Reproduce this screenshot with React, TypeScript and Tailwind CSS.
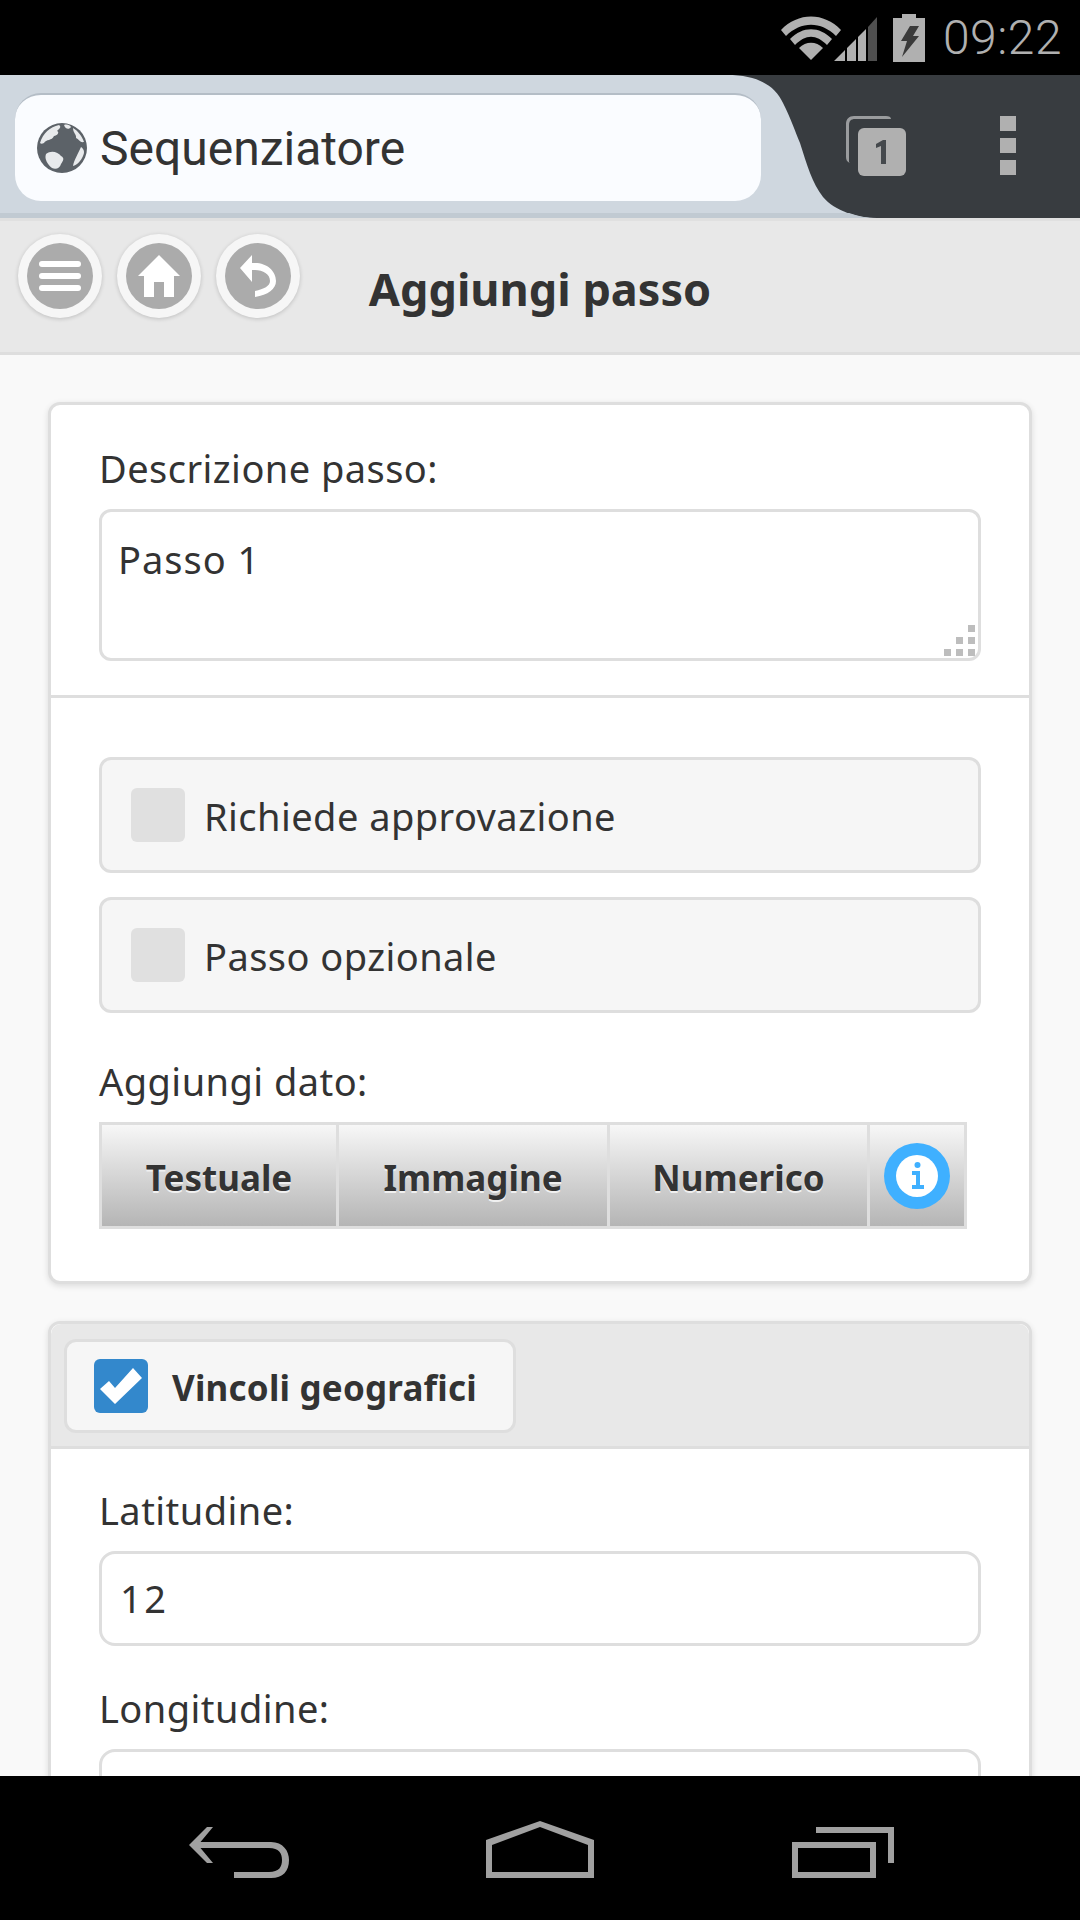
// Schermata "Aggiungi passo" dentro il browser Android
const FONT = "font-['Noto_Sans','DejaVu_Sans',sans-serif]";
const LABEL = "text-[38px] leading-[50px] tracking-[0.45px] text-[#333]";

function StatusBar() {
  return (
    <div className="flex h-[75px] flex-none items-center justify-end bg-black pr-[18px]">
      <svg width="60" height="44" viewBox="0 0 60 44" className="mb-[-1px] mr-[-7px]">
        <path d="M0 14 C17 -4 43 -4 60 14 L55 20 C40 5 20 5 5 20 Z" fill="#b0b0b0" />
        <path d="M9 23 C22 10 38 10 51 23 L46 29 C35 18 25 18 14 29 Z" fill="#b0b0b0" />
        <path d="M18 32 C25 25 35 25 42 32 L30 44 Z" fill="#b0b0b0" />
      </svg>
      <svg width="44" height="48" viewBox="0 0 44 48" className="mt-[1px]">
        <path d="M0 47 L11 36 V47 Z M13 34 L22 25 V47 H13 Z M24 23 L32 15 V47 H24 Z" fill="#b0b0b0" />
        <path d="M34 13 L43 3 V47 H34 Z" fill="#4f4f4f" />
      </svg>
      <svg width="32" height="48" viewBox="0 0 32 48" className="ml-[15px]">
        <path d="M9 0 H23 V4 H32 V48 H0 V4 H9 Z" fill="#b0b0b0" />
        <path d="M17 12 H26 L20 22 H26 L9 43 L14 27 H8 Z" fill="#3a3a3a" />
      </svg>
      <span className="ml-[18px] font-['Roboto',sans-serif] text-[48px] leading-none font-light tracking-[0.5px] text-[#b0b0b0]">
        09:22
      </span>
    </div>
  );
}

function Globe() {
  return (
    <svg width="50" height="50" viewBox="0 0 50 50" className="flex-none">
      <circle cx="25" cy="25" r="25" fill="#5c6268" />
      <path d="M3 20 C6 10 13 4 22 2 C25 4 22 6 20 8 C23 9 20 13 17 13 C15 18 9 16 7 20 C5 21 4 21 3 20 Z" fill="#e8eaec" />
      <path d="M9 31 C14 27 21 29 24 33 C28 35 26 38 24 41 C23 45 19 47 15 45 C11 42 7 36 9 31 Z" fill="#e8eaec" />
      <path d="M36 5 C41 8 45 13 47 19 C43 20 42 16 39 15 C40 12 36 10 36 5 Z" fill="#e8eaec" />
      <path d="M44 24 C47 26 48 29 46 33 C44 38 40 42 36 43 C37 37 41 31 44 24 Z" fill="#e8eaec" />
      <path d="M27 2 C30 1 33 2 34 4 C32 7 28 6 27 2 Z" fill="#e8eaec" />
    </svg>
  );
}

function BrowserBar() {
  return (
    <div className="flex h-[146px] flex-none border-b-[3px] border-[#e0e0e0]">
      <div className="relative z-10 flex w-[727px] flex-none flex-col border-b-[5px] border-[#c1cad2] bg-[#cfd7df] pl-[15px] pt-[18px]">
        <div className="flex h-[108px] w-[746px] flex-none items-center rounded-[26px] border-t-[2px] border-[#b4bdc6] bg-[#fafcff] pl-[22px]">
          <Globe />
          <span className="ml-[13px] pt-[1px] font-['Roboto',sans-serif] text-[48px] leading-none text-[#333]">
            Sequenziatore
          </span>
        </div>
      </div>
      <div className="flex flex-1 items-start bg-[#383c40]">
        <svg width="150" height="143" viewBox="0 0 150 143" className="flex-none">
          <path
            d="M0 0 C30 0 48 10 56 28 C64 44 68 56 73 68 C80 90 85 108 96 122 C108 136 130 143 150 143 L0 143 Z"
            fill="#cfd7df"
          />
          <path d="M0 138 H122 C130 141 140 143 150 143 H0 Z" fill="#c1cad2" />
        </svg>
        <div className="mt-[41px] ml-[-31px] flex items-start">
          <svg width="60" height="60" viewBox="0 0 60 60" className="flex-none">
            <path
              d="M4 47 C1 46 0 44 0 41 V8 C0 3 3 0 8 0 H40 C43 0 45 1 45 3 H9 C5 3 3 5 3 9 V47 Z"
              fill="#9a9c9e"
            />
            <rect x="12" y="12" width="48" height="48" rx="6" fill="#b0b0b0" />
            <path d="M30 28 L37 24 H40 V48 H35 V30 L30 32 Z" fill="#45494d" />
          </svg>
          <div className="ml-[94px] flex flex-col gap-[7px]">
            <div className="h-[15px] w-[16px] bg-[#b0b0b0]" />
            <div className="h-[15px] w-[16px] bg-[#b0b0b0]" />
            <div className="h-[15px] w-[16px] bg-[#b0b0b0]" />
          </div>
        </div>
      </div>
    </div>
  );
}

function RoundIcon({ children }: { children: React.ReactNode }) {
  return (
    <div className="flex h-[84px] w-[84px] items-center justify-center rounded-full bg-[#f6f6f6] shadow-[0_1px_4px_rgba(0,0,0,0.18)]">
      <div className="flex h-[66px] w-[66px] items-center justify-center rounded-full bg-[#ababab]">
        {children}
      </div>
    </div>
  );
}

function PageHeader() {
  return (
    <div className="grid h-[134px] flex-none grid-cols-[1fr_auto_1fr] border-b-[3px] border-[#dedede] bg-[#e8e8e8]">
      <div className="flex gap-[15px] pl-[18px] pt-[13px]">
        <RoundIcon>
          <div className="flex flex-col gap-[6px]">
            <div className="h-[6px] w-[42px] rounded-full bg-white" />
            <div className="h-[6px] w-[42px] rounded-full bg-white" />
            <div className="h-[6px] w-[42px] rounded-full bg-white" />
          </div>
        </RoundIcon>
        <RoundIcon>
          <svg width="42" height="42" viewBox="0 0 42 42">
            <path d="M21 0 L42 21 H36 V42 H26 V27 H16 V42 H6 V21 H0 Z" fill="#fff" />
          </svg>
        </RoundIcon>
        <RoundIcon>
          <svg width="36" height="42" viewBox="0 0 36 42">
            <path d="M0 13 L12 0 V8 H15 C27 8 36 16 36 26 C36 34 28 40 15 42 V36 C24 34 30 31 30 26 C30 19 23 15 15 15 H12 V27 Z" fill="#fff" />
          </svg>
        </RoundIcon>
      </div>
      <h1 className={`${FONT} pt-[40px] text-[45px] leading-[56px] font-bold text-[#333]`}>Aggiungi passo</h1>
      <div />
    </div>
  );
}

function Grip() {
  return (
    <svg width="32" height="32" viewBox="0 0 32 32" className="absolute right-[2px] bottom-[2px]">
      <g fill="#bdbdbd">
        <rect x="24" y="1" width="7" height="7" />
        <rect x="12" y="13" width="7" height="7" />
        <rect x="24" y="13" width="7" height="7" />
        <rect x="0" y="25" width="7" height="7" />
        <rect x="12" y="25" width="7" height="7" />
        <rect x="24" y="25" width="7" height="7" />
      </g>
    </svg>
  );
}

function CheckRow({ label }: { label: string }) {
  return (
    <div className="flex h-[116px] items-center rounded-[12px] border-[3px] border-[#dedede] bg-[#f6f6f6] pl-[29px]">
      <div className="h-[54px] w-[54px] rounded-[6px] bg-[#e0e0e0]" />
      <span className={`ml-[19px] pt-[2px] ${LABEL}`}>{label}</span>
    </div>
  );
}

function GradButton({ label, width }: { label: string; width: string }) {
  return (
    <div
      className={`${width} flex items-center justify-center border-r-[3px] border-[#dedede] bg-gradient-to-b from-[#f7f7f7] to-[#b5b5b5] pt-[5px] text-[35px] font-bold text-[#333] [text-shadow:0_2px_0_#f0f0f0]`}
    >
      {label}
    </div>
  );
}

function Field({ label, value }: { label: string; value: string }) {
  return (
    <div>
      <p className={LABEL}>{label}</p>
      <div className="mt-[16px] flex h-[95px] items-center rounded-[16px] border-[3px] border-[#dedede] bg-white pl-[18px] text-[38px] tracking-[2.5px] text-[#333]">
        {value}
      </div>
    </div>
  );
}

function Content() {
  return (
    <div className={`${FONT} min-h-0 flex-1 overflow-hidden bg-[#f9f9f9] px-[48px] pt-[47px]`}>
      <section className="h-[882px] rounded-[12px] border-[3px] border-[#dedede] bg-white shadow-[0_2px_6px_rgba(0,0,0,0.12)]">
        <div className="h-[293px] border-b-[3px] border-[#dedede] px-[48px] pt-[38px]">
          <p className={LABEL}>Descrizione passo:</p>
          <div className="relative mt-[16px] h-[152px] rounded-[12px] border-[3px] border-[#dedede] pl-[16px] pt-[22px] text-[38px] leading-[50px] tracking-[1px] text-[#333]">
            Passo 1
            <Grip />
          </div>
        </div>
        <div className="px-[48px] pt-[59px]">
          <div className="flex flex-col gap-[24px]">
            <CheckRow label="Richiede approvazione" />
            <CheckRow label="Passo opzionale" />
          </div>
          <p className={`mt-[43px] ${LABEL}`}>Aggiungi dato:</p>
          <div className="mt-[16px] flex h-[107px] w-[868px] border-[3px] border-r-0 border-[#dedede]">
            <GradButton label="Testuale" width="w-[237px]" />
            <GradButton label="Immagine" width="w-[271px]" />
            <GradButton label="Numerico" width="w-[260px]" />
            <div className="flex flex-1 items-center justify-center border-r-[3px] border-[#dedede] bg-gradient-to-b from-[#f7f7f7] to-[#b5b5b5]">
              <div className="flex h-[66px] w-[66px] items-center justify-center rounded-full bg-[#3fb0ff]">
                <div className="flex h-[42px] w-[42px] items-center justify-center rounded-full bg-white">
                  <svg width="13" height="27" viewBox="0 0 13 27">
                    <circle cx="6.5" cy="3" r="3" fill="#3fb0ff" />
                    <path d="M1 9 H9 V23 H13 V27 H1 V23 H5 V13 H1 Z" fill="#3fb0ff" />
                  </svg>
                </div>
              </div>
            </div>
          </div>
        </div>
      </section>
      <section className="mt-[37px] h-[600px] rounded-[12px] border-[3px] border-[#dedede] bg-white shadow-[0_2px_6px_rgba(0,0,0,0.12)]">
        <div className="flex h-[125px] items-start rounded-t-[10px] border-b-[3px] border-[#dedede] bg-[#e8e8e8] pl-[13px] pt-[15px]">
          <div className="flex h-[94px] w-[452px] items-center rounded-[12px] border-[3px] border-[#dedede] bg-[#f6f6f6] pl-[27px]">
            <div className="flex h-[54px] w-[54px] items-center justify-center rounded-[6px] bg-[#3388cc]">
              <svg width="42" height="36" viewBox="0 0 42 36">
                <path d="M0 21 L9 13 L15 20 L33 0 L42 10 L15 36 Z" fill="#fff" />
              </svg>
            </div>
            <span className="ml-[24px] pt-[5px] text-[35px] font-bold tracking-[0.2px] text-[#333]">Vincoli geografici</span>
          </div>
        </div>
        <div className="flex flex-col gap-[37px] px-[48px] pt-[36px]">
          <Field label="Latitudine:" value="12" />
          <Field label="Longitudine:" value="" />
        </div>
      </section>
    </div>
  );
}

function NavBar() {
  return (
    <div className="flex h-[144px] flex-none items-start bg-black pl-[189px] pt-[45px]">
      <svg width="100" height="57" viewBox="0 0 100 57" className="mt-[6px]">
        <path d="M0 18 L18 0 H24 L9 18 L24 36 H18 Z" fill="#a0a0a0" />
        <path
          d="M5 15 H82 C94 15 100 24 100 33 C100 44 94 51 82 51 H45 V45 H80 C90 45 93 40 93 33 C93 26 90 21 80 21 H5 Z"
          fill="#a0a0a0"
        />
      </svg>
      <svg width="108" height="57" viewBox="0 0 108 57" className="ml-[197px]">
        <path fillRule="evenodd" d="M54 0 L108 19 V57 H0 V19 Z M54 6 L102 24 V51 H6 V24 Z" fill="#a0a0a0" />
      </svg>
      <svg width="102" height="51" viewBox="0 0 102 51" className="ml-[198px] mt-[6px]">
        <path d="M24 0 H102 V36 H96 V6 H24 Z" fill="#a0a0a0" />
        <path fillRule="evenodd" d="M0 15 H84 V51 H0 Z M6 21 V45 H78 V21 Z" fill="#a0a0a0" />
      </svg>
    </div>
  );
}

export default function App() {
  return (
    <div className="flex h-[1920px] w-[1080px] flex-col overflow-hidden">
      <StatusBar />
      <BrowserBar />
      <PageHeader />
      <Content />
      <NavBar />
    </div>
  );
}
